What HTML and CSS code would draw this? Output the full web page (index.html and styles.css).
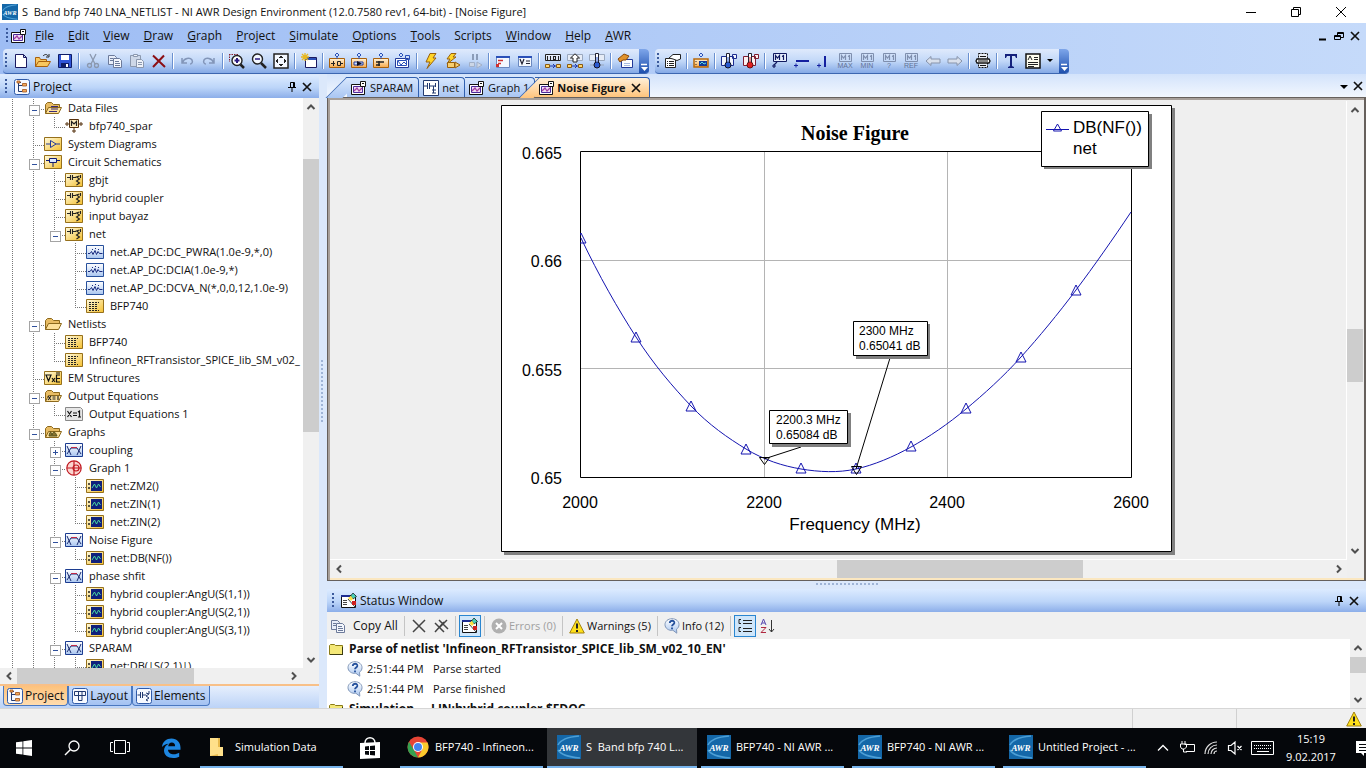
FILE: index.html
```html
<!DOCTYPE html>
<html lang="en">
<head>
<meta charset="utf-8">
<title>S Band bfp 740 LNA_NETLIST - NI AWR Design Environment</title>
<link rel="stylesheet" href="styles.css">
</head>
<body>
<svg class="sprite" aria-hidden="true">
  <defs>
    <linearGradient id="gold" x1="0" y1="0" x2="1" y2="1"><stop offset="0" stop-color="#fffbe0"/><stop offset="1" stop-color="#f5c030"/></linearGradient>
    <linearGradient id="ice" x1="0" y1="0" x2="0" y2="1"><stop offset="0" stop-color="#fff"/><stop offset="1" stop-color="#a9c6f0"/></linearGradient>
    <linearGradient id="peach" x1="0" y1="0" x2="0" y2="1"><stop offset="0" stop-color="#fff3d8"/><stop offset="1" stop-color="#f7a94a"/></linearGradient>
  </defs>
  <symbol id="awr" viewBox="0 0 24 24"><path fill="#1467a8" d="M0 0h24v24H0z"/><path fill="none" stroke="#4d9fd6" stroke-width="1.6" d="M22 1C10 2 3 6 1 10M1 15c3 5 11 7 22 8"/><text x="12" y="16" text-anchor="middle" fill="#fff" class="logo-text">AWR</text></symbol>
  <symbol id="graphwin" viewBox="0 0 16 16"><path fill="#fff" stroke="#111" d="M.5 4.500h13v10H.5z"/><path fill="#f0dcf4" d="M3 7h8v5H3z"/><path fill="none" stroke="#4b2a9a" d="M2.500 6.500h9v6h-9z"/><path fill="none" stroke="#a03ca0" stroke-width="1.300" d="M3 11l3-3 2 3 3-3"/><path fill="#fff" stroke="#111" d="M9.500 1.500h5v5h-5zM11 3.500h2"/></symbol>
  <symbol id="new" viewBox="0 0 16 16"><path fill="#fff" stroke="#1a1a60" d="M2.500 1.500h8l3 3v10h-11zM10.500 1.500v3h3"/></symbol>
  <symbol id="open" viewBox="0 0 16 16"><path fill="#f8c860" stroke="#a8600c" d="M.5 13.500v-9h4l1 2h6v2M.5 13.500l3-5h12l-3 5z"/><path fill="none" stroke="#222" d="M8 3c2-2 4-2 5 0m1-2v3h-3"/></symbol>
  <symbol id="save" viewBox="0 0 16 16"><path fill="#2f55d8" stroke="#0e1c66" d="M1.500 1.500h13v13h-13z"/><path fill="#fff" d="M4 2h8v5H4z"/><path fill="#0e1c66" d="M4 10h8v4H4z"/><path fill="#fff" d="M9 11h2v3H9z"/></symbol>
  <symbol id="cut" viewBox="0 0 16 16"><g fill="none" stroke="#8b98ae" stroke-width="1.300"><path d="M5 1l5 10M11 1L6 11"/><circle cx="4.500" cy="12.500" r="2"/><circle cx="11.500" cy="12.500" r="2"/></g></symbol>
  <symbol id="copy" viewBox="0 0 16 16"><path fill="#e8eefa" stroke="#6c7a9a" d="M1.500 2.500h6l2 2v7h-8z"/><path fill="#f4f7fd" stroke="#6c7a9a" d="M6.500 5.500h6l2 2v7h-8zM8 8.500h4M8 10.500h5M8 12.500h5M3 5.500h3M3 7.500h3"/></symbol>
  <symbol id="paste" viewBox="0 0 16 16"><path fill="#ced8e8" stroke="#8b98ae" d="M1.500 2.500h10v11h-10z"/><path fill="#eef2f9" stroke="#8b98ae" d="M4.500 1.500h4v2h-4zM7.500 6.500h5l2 2v6h-7zM9 9.500h4M9 11.500h4"/></symbol>
  <symbol id="del" viewBox="0 0 16 16"><path stroke="#8c0f14" stroke-width="2" d="M2 2.500l12 11.500M13 2.500L2 14"/></symbol>
  <symbol id="undo" viewBox="0 0 16 16"><path fill="none" stroke="#8295b8" stroke-width="1.500" d="M3 5v5h5M3.500 9.500C5 5 11 4 13 7c1 2 0 4-2 4"/></symbol>
  <symbol id="redo" viewBox="0 0 16 16"><path fill="none" stroke="#8295b8" stroke-width="1.500" d="M13 5v5H8M12.500 9.500C11 5 5 4 3 7c-1 2 0 4 2 4"/></symbol>
  <symbol id="zin" viewBox="0 0 16 16"><path fill="none" stroke="#8a2030" stroke-dasharray="1.500 1" d="M0 1.500h10M.5 1v8"/><circle cx="8" cy="7.500" r="5" fill="#fff" stroke="#222" stroke-width="1.400"/><path stroke="#2a1a80" stroke-width="2" d="M5.500 7.500h5M8 5v5"/><path stroke="#222" stroke-width="2.500" d="M11.500 11.500L15 15"/></symbol>
  <symbol id="zout" viewBox="0 0 16 16"><circle cx="6.500" cy="6" r="5" fill="#f4f8ff" stroke="#222" stroke-width="1.400"/><path stroke="#2a1a80" stroke-width="1.600" d="M4 6h5"/><path stroke="#222" stroke-width="2.500" d="M10 10l5 5"/></symbol>
  <symbol id="fit" viewBox="0 0 16 16"><path fill="#f4f8ff" stroke="#222" stroke-width="1.500" d="M1 1h14v14H1z"/><path fill="#222" d="M7 3h2v1h1v1H6V4h1zM7 13h2v-1h1v-1H6v1h1zM3 7v2h1v1h1V6H4v1zM13 7v2h-1v1h-1V6h1v1z"/></symbol>
  <symbol id="newwin" viewBox="0 0 16 16"><path fill="#fff" stroke="#1a1a60" d="M4.500 4.500h11v10h-11z"/><path fill="#2a50b8" d="M5 5h10v2H5z"/><path stroke="#e8b820" stroke-width="1.300" d="M4 0v8M0 4h8M1 1l6 6M7 1L1 7"/></symbol>
  <symbol id="addsch" viewBox="0 0 16 16"><path fill="url(#peach)" stroke="#a8600c" d="M.5 5.500h15v9H.5z"/><path fill="none" stroke="#2a50b8" d="M8 0l2 2-2 2-2-2zM8 4v2"/><path fill="none" stroke="#222" d="M2 10.500h4M4.500 8v5M8.500 8.500h3v4h-3zM12 10.500h2"/></symbol>
  <symbol id="addsys" viewBox="0 0 16 16"><path fill="url(#peach)" stroke="#a8600c" d="M.5 5.500h15v9H.5z"/><path fill="none" stroke="#2a50b8" d="M8 0l2 2-2 2-2-2zM8 4v2"/><path fill="#cfe0ff" stroke="#223a99" d="M3 9h9v3H3z"/><path fill="#112" d="M6 8l5 2.500L6 13z"/></symbol>
  <symbol id="addem" viewBox="0 0 16 16"><path fill="url(#peach)" stroke="#a8600c" d="M.5 5.500h15v9H.5z"/><path fill="none" stroke="#2a50b8" d="M8 0l2 2-2 2-2-2zM8 4v2"/><path stroke="#222" stroke-width="1.500" d="M3 9h8M3 12h4M6 8v5"/></symbol>
  <symbol id="addgraph" viewBox="0 0 16 16"><path fill="#fff" stroke="#223a99" d="M.5 5.500h13v9H.5z"/><path fill="none" stroke="#2a50b8" d="M6 0l2 2-2 2-2-2zM10.500 2.500h4v4h-4zM2.500 7.500h9v5h-9zM3 8l3 4 3-3 2 2"/></symbol>
  <symbol id="bolt" viewBox="0 0 16 16"><path fill="#ffd428" stroke="#98600c" d="M7 .5h6L10 5h3L4 15.500 7 9H3z"/></symbol>
  <symbol id="boltgo" viewBox="0 0 16 16"><path fill="#ffd428" stroke="#98600c" d="M6 .5h5L8 4h3L2 11l3-5H2z"/><path fill="#f8cf70" stroke="#98600c" d="M2.500 9.500h7v5h-7zM10 9l5 3-5 3z"/></symbol>
  <symbol id="pause" viewBox="0 0 16 16"><path fill="#8b9cb8" d="M5 1h2v6H5zM9 1h2v6H9z"/><path fill="#ccd6e6" stroke="#a2b0c8" d="M2.500 9.500h5v4h-5zM10 9l5 3-5 3z"/></symbol>
  <symbol id="eqred" viewBox="0 0 16 16"><path fill="#f4f8ff" stroke="#6a88c0" d="M1.500 3.500h13v11h-13z"/><path fill="#2a50b8" d="M1 3h14v2H1z"/><path stroke="#d03030" stroke-width="1.500" d="M3 7.500h5M3 10.500h3"/><path fill="#d03030" d="M1 11h3v3H1z"/></symbol>
  <symbol id="vars" viewBox="0 0 16 16"><path fill="#f4f8ff" stroke="#6a88c0" d="M1.500 3.500h13v10h-13z"/><path fill="#2a50b8" d="M1 3h14v2H1z"/><path fill="none" stroke="#223" stroke-width="1.200" d="M3 6l2 5 2-5M9 8h4M9 10.500h4"/></symbol>
  <symbol id="bits" viewBox="0 0 16 16"><path fill="#e8f0ff" stroke="#222" d="M.5 1.500h15v6H.5z"/><path fill="none" stroke="#222" stroke-width="1.100" d="M2.500 3v4M5.500 3v4M13.500 3v4M8.500 3.500h2v3h-2z"/><path fill="#ffd870" stroke="#8a5a10" d="M.5 11.500h4v3h-4zM11.500 11.500h4v3h-4z"/><path fill="none" stroke="#1c36a8" d="M5 13h6M8 11l2 2-2 2"/></symbol>
  <symbol id="uparr" viewBox="0 0 16 16"><path fill="#e6ecf6" stroke="#9aa8be" d="M.5 1.500h15v6H.5z"/><path fill="#fff" stroke="#222" d="M8 .8L12.500 5H10v4H6V5H3.500z"/><path fill="#ffd870" stroke="#8a5a10" d="M.5 11.500h4v3h-4zM11.500 11.500h4v3h-4z"/><path fill="none" stroke="#1c36a8" d="M5 13h6M8 11l2 2-2 2"/></symbol>
  <symbol id="thermo" viewBox="0 0 16 16"><path fill="#e6ecf6" stroke="#9aa8be" d="M.5 1.500h15v6H.5zM1 12h14"/><path fill="#fff" stroke="#223" d="M6.500.500h3v9h-3z"/><circle cx="8" cy="12" r="3" fill="#2a5ad0" stroke="#112"/><path stroke="#2a5ad0" d="M8 4v7"/></symbol>
  <symbol id="wiz" viewBox="0 0 16 16"><path fill="#fff" stroke="#223a99" d="M4.500 6.500h11v8h-11z"/><path fill="#e0922c" stroke="#8a4a08" d="M1 6l6-5 5 2-3 4H6L3 9z"/><path stroke="#a8bce0" d="M7 10.500h6M7 12.500h6"/></symbol>
  <symbol id="props" viewBox="0 0 16 16"><path fill="#fff" stroke="#222" d="M.5 5.500h10v9H.5z"/><path fill="#fff" stroke="#222" d="M4 5l4-3.500h7.500V6L12 7.500 8 6z"/><path stroke="#222" d="M2 8.500h1M4 8.500h5M2 10.500h1M4 10.500h5M2 12.500h1M4 12.500h5"/></symbol>
  <symbol id="meas" viewBox="0 0 16 16"><path fill="url(#peach)" stroke="#b86808" stroke-width="1.500" d="M1 6h14v8H1z"/><path fill="#123a98" d="M6 8h8v5H6z"/><path stroke="#222" d="M3 8v1M3 11v1"/><path fill="none" stroke="#5fe0e0" d="M7 11l2-2 2 2 2-1"/><path fill="none" stroke="#2a50b8" d="M8 0l2 2-2 2-2-2z"/></symbol>
  <symbol id="tblue" viewBox="0 0 16 16"><path fill="#f3f6fd" stroke="#1c2c90" d="M.5 3.500h12v9H.5zM11.500 1.500h4v4h-4z"/><path fill="#fff" stroke="#223" d="M5.500.500h3v10h-3z"/><circle cx="7" cy="12" r="3" fill="#2a5ad0" stroke="#112"/><path stroke="#2a5ad0" d="M7 4v7"/></symbol>
  <symbol id="tred" viewBox="0 0 16 16"><path fill="#fdf0f0" stroke="#801c30" d="M.5 3.500h12v9H.5zM11.500 1.500h4v4h-4z"/><path fill="#fff" stroke="#223" d="M5.500.500h3v10h-3z"/><circle cx="7" cy="12" r="3" fill="#e02020" stroke="#611"/><path stroke="#e02020" d="M7 4v7"/></symbol>
  <symbol id="m1" viewBox="0 0 16 16"><path fill="#e8effc" stroke="#111a60" d="M2.500.500h13v8h-13z"/><path fill="none" stroke="#111a60" stroke-width="1.200" d="M4.500 7V2.500L6.500 5l2-2.500V7M11 3.500l1.500-1V7M6 9l-3 3M1 13h4M3 11v4"/></symbol>
  <symbol id="mh" viewBox="0 0 16 16"><path stroke="#1420a0" stroke-width="2" d="M3 8h13"/><path stroke="#1420a0" d="M1 12.500h4M3 10.500v4"/></symbol>
  <symbol id="mv" viewBox="0 0 16 16"><path stroke="#1420a0" stroke-width="2" d="M10 3v11"/><path stroke="#1420a0" d="M2 12.500h4M4 10.500v4"/></symbol>
  <symbol id="mg" viewBox="0 0 16 9"><path fill="none" stroke="#7f8fae" d="M2.500.500h12v8h-12z"/><path fill="none" stroke="#7f8fae" stroke-width="1.200" d="M4.500 7V2.500L6.500 5l2-2.500V7M11 3.500l1.500-1V7"/></symbol>
  <symbol id="al" viewBox="0 0 16 16"><path fill="#d9e0ec" stroke="#8793aa" d="M1 8l5-4.500V6h9v4H6v2.500z"/></symbol>
  <symbol id="ar" viewBox="0 0 16 16"><path fill="#d9e0ec" stroke="#8793aa" d="M15 8l-5-4.500V6H1v4h9v2.500z"/></symbol>
  <symbol id="print" viewBox="0 0 16 16"><path fill="#e9edf5" stroke="#111" stroke-dasharray="2 1" d="M3.500.500h9v14h-9z"/><path fill="#fff" stroke="#111" stroke-width="1.300" d="M2 6h12l1 2-1 2H2L1 8z"/><path stroke="#111" d="M5 3.500h6M5 12.500h6M3 8h10"/></symbol>
  <symbol id="tt" viewBox="0 0 16 16"><path fill="#14207c" d="M2 1h12v4h-1l-1-2H9v10l2 1v1H5v-1l2-1V3H4L3 5H2z"/></symbol>
  <symbol id="notes" viewBox="0 0 16 16"><path fill="#fffef0" stroke="#111" stroke-width="1.500" d="M1 1h14v14H1z"/><path fill="none" stroke="#222" d="M9 4.500h4M9 6.500h4M3 9.500h10M3 11.500h10M3 13.500h6M3 7l2-4 2 4"/></symbol>
  <symbol id="projicon" viewBox="0 0 16 16"><rect x=".5" y=".5" width="15" height="15" rx="2" fill="#f6f9ff" stroke="#2f5aa8"/><path fill="none" stroke="#223a70" d="M4.500 3v9.500H8M4.500 6.500H8M3 3.500h4"/><path fill="#f3a95c" stroke="#a05018" stroke-width=".8" d="M8.500 4.500h4v2.500h-4zM8.500 10.500h4v2.500h-4zM3 2h3v2H3z"/></symbol>
  <symbol id="layicon" viewBox="0 0 16 16"><rect x=".5" y=".5" width="15" height="15" rx="2" fill="#f6f9ff" stroke="#2f5aa8"/><path fill="none" stroke="#223a70" d="M2.500 3.500h11v4h-11zM6.500 3.500v4M10 3.500v4M6.500 7.500v5h3.500v-5"/></symbol>
  <symbol id="elicon" viewBox="0 0 16 16"><rect x=".5" y=".5" width="15" height="15" rx="2" fill="#f6f9ff" stroke="#2f5aa8"/><path fill="none" stroke="#223a70" d="M1.500 7h3M4.500 4v6M6.500 4v6M6.500 7H10M10 5l3 1-3 2 3 2-3 2 2 1M13 3v3"/></symbol>
  <symbol id="fold" viewBox="0 0 18 14"><path fill="#e8bc64" stroke="#8c681c" d="M1.500 12.500v-9l2-2h4l2 2h6v3"/><path fill="#fde09a" stroke="#8c681c" d="M1.500 12.500l3-6h13l-3 6z"/></symbol>
  <symbol id="foldd" viewBox="0 0 18 14"><use href="#fold"/><path fill="none" stroke="#3a2a78" d="M7 5.500h7M7 8h7M5 10.500h8"/></symbol>
  <symbol id="folde" viewBox="0 0 18 14"><use href="#fold"/><path fill="none" stroke="#222" stroke-width="1.200" d="M4 7l3 4M7 7l-3 4M8.500 8h3M8.500 10h3M14 7v4"/></symbol>
  <symbol id="foldg" viewBox="0 0 18 14"><use href="#fold"/><path fill="#8a7430" stroke="#54501c" d="M5 11c1-5 2-5 3-1 1-4 3-4 5 1z"/></symbol>
  <symbol id="mdat" viewBox="0 0 18 14"><path fill="none" stroke="#55300c" d="M0 5h4M14 5h4M9 9v5M2 3v4M16 3v4M7 12h4"/><path fill="#ffeec0" stroke="#55300c" d="M4.500.500h9v8h-9z"/><path fill="none" stroke="#222" stroke-width="1.200" d="M6.500 7V2.500L9 5l2.500-2.500V7"/></symbol>
  <symbol id="sysd" viewBox="0 0 18 14"><path fill="url(#gold)" stroke="#96701c" d="M.5.500h17v13H.5z"/><path fill="none" stroke="#223a99" d="M2 7h4M12 7h4M6.500 3.500L12 7l-5.500 3.500z"/></symbol>
  <symbol id="cirs" viewBox="0 0 18 14"><path fill="url(#gold)" stroke="#96701c" d="M.5.500h17v13H.5z"/><path fill="#dce8ff" stroke="#111a70" d="M5.500 3.500h7v4h-7zM2 5.500h3M13 5.500h3M9 8v4"/></symbol>
  <symbol id="sch" viewBox="0 0 18 14"><path fill="url(#gold)" stroke="#96701c" d="M.5.500h17v13H.5z"/><path fill="none" stroke="#222" stroke-width="1.100" d="M2 4.500h3M5.500 2v5M7.500 2v5M7.500 4.500H11M14.500 3l-3 1 3 2-3 2 3 2-3 2M15.500 2v3"/></symbol>
  <symbol id="meter" viewBox="0 0 18 14"><path fill="url(#ice)" stroke="#27509c" d="M.5.500h17v13H.5z"/><path fill="none" stroke="#1a2c80" d="M2 8.500h2l1.500-2 1.500 3 2-4 1.500 4 1.500-3 1.500 2h3M6 4.500h1M9 3.500h1M12 4.500h1"/></symbol>
  <symbol id="netl" viewBox="0 0 18 14"><path fill="url(#gold)" stroke="#96701c" d="M.5.500h17v13H.5z"/><path stroke="#222" stroke-dasharray="2 1" d="M3 3.500h10M3 5.500h8M3 7.500h8M3 9.500h8M3 11.500h10"/></symbol>
  <symbol id="em" viewBox="0 0 18 14"><path fill="url(#gold)" stroke="#96701c" d="M.5.500h17v13H.5z"/><path fill="none" stroke="#111" stroke-width="1.200" d="M2 4h5L4.500 10zM8 7l3 4M11 7l-3 4M16 4h-3.500v7H16M12.500 7.500H16M12 2h4"/></symbol>
  <symbol id="xeq" viewBox="0 0 18 14"><path fill="#e6e6e6" stroke="#888" d="M.5.500h15l2 2v11H.5z"/><path fill="none" stroke="#111" stroke-width="1.200" d="M2.500 4l4 6M6.500 4l-4 6M8 6h4M8 8.500h4M13 5l1.500-1v6M13 10h3"/></symbol>
  <symbol id="rect" viewBox="0 0 18 14"><path fill="url(#ice)" stroke="#1c3c90" d="M.5.500h17v13H.5z"/><path fill="none" stroke="#1c2c70" d="M2 3l4 9M16 3l-4 9M2 11l4-6h6l4 6"/><path stroke="#c02848" d="M6 4.500h6"/></symbol>
  <symbol id="smith" viewBox="0 0 18 16"><g fill="#fbd5d0" stroke="#c01820" stroke-width="1.200"><circle cx="9" cy="8" r="7.200"/><circle cx="11" cy="8" r="3" fill="none"/><path d="M2 8h14M9 1v14" fill="none"/></g></symbol>
  <symbol id="msr" viewBox="0 0 18 14"><path fill="url(#gold)" stroke="#96701c" d="M.5.500h17v13H.5z"/><path fill="#10207c" d="M5 2h11v10H5z"/><path stroke="#222" stroke-width="1.500" d="M3 4v2M3 8v2"/><path fill="none" stroke="#49d8a0" d="M6 9l2.500-4 2 4 2-4 2 3"/></symbol>
  <symbol id="pin" viewBox="0 0 10 10"><path fill="none" stroke="#000" d="M3.500.500h4v5h-4zM6.500 1v4M1 5.500h8M5 6v4"/></symbol>
  <symbol id="x" viewBox="0 0 10 10"><path fill="none" stroke="currentColor" stroke-width="1.700" d="M1 1l8 8M9 1L1 9"/></symbol>
  <symbol id="up" viewBox="0 0 10 10"><path fill="none" stroke="#505050" stroke-width="2" d="M1.500 7L5 3.500 8.500 7"/></symbol>
  <symbol id="dn" viewBox="0 0 10 10"><path fill="none" stroke="#505050" stroke-width="2" d="M1.500 3L5 6.500 8.500 3"/></symbol>
  <symbol id="lf" viewBox="0 0 10 10"><path fill="none" stroke="#505050" stroke-width="2" d="M7 1.500L3.500 5 7 8.500"/></symbol>
  <symbol id="rt" viewBox="0 0 10 10"><path fill="none" stroke="#505050" stroke-width="2" d="M3 1.500L6.500 5 3 8.500"/></symbol>
  <symbol id="stat" viewBox="0 0 16 16"><path fill="#fff" stroke="#111" d="M.5 2.500h14v12H.5z"/><path fill="#1c2c90" d="M0 2h9v2H0z"/><path fill="none" stroke="#444" d="M2 7.500h4M2 9.500h4M2 11.500h4M7 6l7 8"/><path fill="#48d0b8" stroke="#111" stroke-width=".7" d="M12 0l3.500 3.500L12 6 9.500 3z"/><path fill="#ffe040" d="M7 5l3-2 2 3-2 2z"/><path fill="#d02020" d="M11 8h4v4h-4z"/></symbol>
  <symbol id="warn" viewBox="0 0 16 16"><path fill="#ffe01a" stroke="#a08010" d="M8 1l7.300 14H.7z"/><path stroke="#222" stroke-width="2" d="M8 5.500v5M8 12v2"/></symbol>
  <symbol id="info" viewBox="0 0 16 16"><path fill="url(#ice)" stroke="#8096b8" d="M8 .7c4 0 7 2.500 7 6 0 2-1 3.500-2.500 4.500l.3 4-4-3C4.500 13 1 10 1 6.700c0-3.500 3-6 7-6z"/><path fill="none" stroke="#24509c" stroke-width="1.800" d="M5.800 5c0-3 5-3 4.500 0C10 6.500 8 6.500 8 8.300M8 9.500v1.700"/></symbol>
  <symbol id="yfold" viewBox="0 0 14 12"><path fill="#f4e878" stroke="#8a7c18" d="M.5 2.500l1-1h4l1 1h7v9H.5z"/><path stroke="#3c3c10" d="M1 11.500h13M13.500 4v8"/></symbol>
</svg>

<div class="app">
  <header class="title">
    <svg class="i16"><use href="#awr"/></svg>
    <h1>S&nbsp; Band bfp 740 LNA_NETLIST - NI AWR Design Environment (12.0.7580 rev1, 64-bit) - [Noise Figure]</h1>
    <div class="caption">
      <button aria-label="Minimize"><svg viewBox="0 0 10 10"><path d="M0 5.500h10" stroke="#000"/></svg></button>
      <button aria-label="Restore"><svg viewBox="0 0 10 10"><path d="M.5 2.500h7v7h-7zM2.500 2V.5h7v7H8" fill="none" stroke="#000"/></svg></button>
      <button aria-label="Close"><svg viewBox="0 0 10 10"><path d="M0 0l10 10M10 0L0 10" stroke="#000"/></svg></button>
    </div>
  </header>

  <nav class="menu">
    <i class="grip"></i><svg class="i16"><use href="#graphwin"/></svg>
    <button><u>F</u>ile</button><button><u>E</u>dit</button><button><u>V</u>iew</button><button><u>D</u>raw</button><button><u>G</u>raph</button><button><u>P</u>roject</button><button><u>S</u>imulate</button><button><u>O</u>ptions</button><button><u>T</u>ools</button><button>Scripts</button><button><u>W</u>indow</button><button><u>H</u>elp</button><button><u>A</u>WR</button>
    <div class="mdi">
      <button aria-label="Minimize window"><svg class="i10"><path d="M1 8.500h7" stroke="#000" stroke-width="2"/></svg></button>
      <button aria-label="Restore window"><svg class="i10"><path d="M.5 4.500h6v4h-6zM.5 5.500h6M3.500 4V1.500h6v5H7M3.500 2.500h6" fill="none" stroke="#000"/></svg></button>
      <button aria-label="Close window"><svg class="i10"><use href="#x"/></svg></button>
    </div>
  </nav>

  <div class="bars">
    <div class="bar">
      <i class="grip"></i>
      <button aria-label="New"><svg class="i16"><use href="#new"/></svg></button><button aria-label="Open"><svg class="i16"><use href="#open"/></svg></button><button aria-label="Save"><svg class="i16"><use href="#save"/></svg></button><i class="sep"></i>
      <button aria-label="Cut"><svg class="i16"><use href="#cut"/></svg></button><button aria-label="Copy"><svg class="i16"><use href="#copy"/></svg></button><button aria-label="Paste"><svg class="i16"><use href="#paste"/></svg></button><button aria-label="Delete"><svg class="i16"><use href="#del"/></svg></button><i class="sep"></i>
      <button aria-label="Undo"><svg class="i16"><use href="#undo"/></svg></button><button aria-label="Redo"><svg class="i16"><use href="#redo"/></svg></button><i class="sep"></i>
      <button aria-label="Zoom in"><svg class="i16"><use href="#zin"/></svg></button><button aria-label="Zoom out"><svg class="i16"><use href="#zout"/></svg></button><button aria-label="View all"><svg class="i16"><use href="#fit"/></svg></button><i class="sep"></i>
      <button aria-label="New window"><svg class="i16"><use href="#newwin"/></svg></button><i class="sep"></i>
      <button aria-label="Add schematic"><svg class="i16"><use href="#addsch"/></svg></button><button aria-label="Add system diagram"><svg class="i16"><use href="#addsys"/></svg></button><button aria-label="Add EM structure"><svg class="i16"><use href="#addem"/></svg></button><button aria-label="Add graph"><svg class="i16"><use href="#addgraph"/></svg></button><i class="sep"></i>
      <button aria-label="Analyze"><svg class="i16"><use href="#bolt"/></svg></button><button aria-label="Run simulators"><svg class="i16"><use href="#boltgo"/></svg></button><button aria-label="Pause"><svg class="i16"><use href="#pause"/></svg></button><i class="sep"></i>
      <button aria-label="Optimizer"><svg class="i16"><use href="#eqred"/></svg></button><button aria-label="Variables"><svg class="i16"><use href="#vars"/></svg></button><i class="sep"></i>
      <button aria-label="Data"><svg class="i16"><use href="#bits"/></svg></button><button aria-label="Export"><svg class="i16"><use href="#uparr"/></svg></button><button aria-label="Tune data"><svg class="i16"><use href="#thermo"/></svg></button><i class="sep"></i>
      <button aria-label="Wizard"><svg class="i16"><use href="#wiz"/></svg></button>
      <button class="more" aria-label="More"><svg class="i10"><path d="M2 1.500h6" stroke="#fff" stroke-width="1.500"/><path d="M2 4h7L5.500 8z" fill="#fff"/></svg></button>
    </div>
    <div class="bar">
      <i class="grip"></i>
      <button aria-label="Properties"><svg class="i16"><use href="#props"/></svg></button><i class="sep"></i>
      <button aria-label="Add measurement"><svg class="i16"><use href="#meas"/></svg></button><i class="sep"></i>
      <button aria-label="Freeze"><svg class="i16"><use href="#tblue"/></svg></button><button aria-label="Clear frozen"><svg class="i16"><use href="#tred"/></svg></button><i class="sep"></i>
      <button aria-label="Marker"><svg class="i16"><use href="#m1"/></svg></button><button aria-label="Horizontal line"><svg class="i16"><use href="#mh"/></svg></button><button aria-label="Vertical line"><svg class="i16"><use href="#mv"/></svg></button>
      <button class="mk"><svg><use href="#mg"/></svg>MAX</button><button class="mk"><svg><use href="#mg"/></svg>MIN</button><button class="mk"><svg><use href="#mg"/></svg>?</button><button class="mk"><svg><use href="#mg"/></svg>REF</button>
      <button aria-label="Previous"><svg class="i16"><use href="#al"/></svg></button><button aria-label="Next"><svg class="i16"><use href="#ar"/></svg></button><i class="sep"></i>
      <button aria-label="Print"><svg class="i16"><use href="#print"/></svg></button><i class="sep"></i>
      <button aria-label="Text"><svg class="i16"><use href="#tt"/></svg></button><button aria-label="Notes"><svg class="i16"><use href="#notes"/></svg></button>
      <button class="drop" aria-label="Notes menu"><svg class="i10"><path d="M2 3h6L5 6z"/></svg></button>
      <button class="more" aria-label="More"><svg class="i10"><path d="M2 1.500h6" stroke="#fff" stroke-width="1.500"/><path d="M2 4h7L5.500 8z" fill="#fff"/></svg></button>
    </div>
  </div>

  <main class="work">
    <aside class="side">
      <div class="phead"><i class="grip"></i><svg class="i16"><use href="#projicon"/></svg><h2>Project</h2><button aria-label="Pin"><svg class="i10"><use href="#pin"/></svg></button><button aria-label="Close panel"><svg class="i10"><use href="#x"/></svg></button></div>
      <div class="treebox">
        <ul class="tree">
          <li><i class="v"></i><i class="v h b"></i><svg><use href="#foldd"/></svg>Data Files</li>
          <li><i class="v"></i><i class="v"></i><i class="l h"></i><svg><use href="#mdat"/></svg>bfp740_spar</li>
          <li><i class="v"></i><i class="v h"></i><svg><use href="#sysd"/></svg>System Diagrams</li>
          <li><i class="v"></i><i class="v h b"></i><svg><use href="#cirs"/></svg>Circuit Schematics</li>
          <li><i class="v"></i><i class="v"></i><i class="v h"></i><svg><use href="#sch"/></svg>gbjt</li>
          <li><i class="v"></i><i class="v"></i><i class="v h"></i><svg><use href="#sch"/></svg>hybrid coupler</li>
          <li><i class="v"></i><i class="v"></i><i class="v h"></i><svg><use href="#sch"/></svg>input bayaz</li>
          <li><i class="v"></i><i class="v"></i><i class="l h b"></i><svg><use href="#sch"/></svg>net</li>
          <li><i class="v"></i><i class="v"></i><i></i><i class="v h"></i><svg><use href="#meter"/></svg>net.AP_DC:DC_PWRA(1.0e-9,*,0)</li>
          <li><i class="v"></i><i class="v"></i><i></i><i class="v h"></i><svg><use href="#meter"/></svg>net.AP_DC:DCIA(1.0e-9,*)</li>
          <li><i class="v"></i><i class="v"></i><i></i><i class="v h"></i><svg><use href="#meter"/></svg>net.AP_DC:DCVA_N(*,0,0,12,1.0e-9)</li>
          <li><i class="v"></i><i class="v"></i><i></i><i class="l h"></i><svg><use href="#netl"/></svg>BFP740</li>
          <li><i class="v"></i><i class="v h b"></i><svg><use href="#fold"/></svg>Netlists</li>
          <li><i class="v"></i><i class="v"></i><i class="v h"></i><svg><use href="#netl"/></svg>BFP740</li>
          <li><i class="v"></i><i class="v"></i><i class="l h"></i><svg><use href="#netl"/></svg>Infineon_RFTransistor_SPICE_lib_SM_v02_</li>
          <li><i class="v"></i><i class="v h"></i><svg><use href="#em"/></svg>EM Structures</li>
          <li><i class="v"></i><i class="v h b"></i><svg><use href="#folde"/></svg>Output Equations</li>
          <li><i class="v"></i><i class="v"></i><i class="l h"></i><svg><use href="#xeq"/></svg>Output Equations 1</li>
          <li><i class="v"></i><i class="v h b"></i><svg><use href="#foldg"/></svg>Graphs</li>
          <li><i class="v"></i><i class="v"></i><i class="v h b plus"></i><svg><use href="#rect"/></svg>coupling</li>
          <li><i class="v"></i><i class="v"></i><i class="v h b"></i><svg class="tall"><use href="#smith"/></svg>Graph 1</li>
          <li><i class="v"></i><i class="v"></i><i class="v"></i><i class="v h"></i><svg><use href="#msr"/></svg>net:ZM2()</li>
          <li><i class="v"></i><i class="v"></i><i class="v"></i><i class="v h"></i><svg><use href="#msr"/></svg>net:ZIN(1)</li>
          <li><i class="v"></i><i class="v"></i><i class="v"></i><i class="l h"></i><svg><use href="#msr"/></svg>net:ZIN(2)</li>
          <li><i class="v"></i><i class="v"></i><i class="v h b"></i><svg><use href="#rect"/></svg>Noise Figure</li>
          <li><i class="v"></i><i class="v"></i><i class="v"></i><i class="l h"></i><svg><use href="#msr"/></svg>net:DB(NF())</li>
          <li><i class="v"></i><i class="v"></i><i class="v h b"></i><svg><use href="#rect"/></svg>phase shfit</li>
          <li><i class="v"></i><i class="v"></i><i class="v"></i><i class="v h"></i><svg><use href="#msr"/></svg>hybrid coupler:AngU(S(1,1))</li>
          <li><i class="v"></i><i class="v"></i><i class="v"></i><i class="v h"></i><svg><use href="#msr"/></svg>hybrid coupler:AngU(S(2,1))</li>
          <li><i class="v"></i><i class="v"></i><i class="v"></i><i class="l h"></i><svg><use href="#msr"/></svg>hybrid coupler:AngU(S(3,1))</li>
          <li><i class="v"></i><i class="v"></i><i class="v h b"></i><svg><use href="#rect"/></svg>SPARAM</li>
          <li><i class="v"></i><i class="v"></i><i class="v"></i><i class="v h"></i><svg><use href="#msr"/></svg>net:DB(|S(2,1)|)</li>
        </ul>
        <div class="vs vs-tree"><svg class="i10"><use href="#up"/></svg><i></i><b></b><i></i><svg class="i10"><use href="#dn"/></svg></div>
      </div>
      <div class="hs hs-tree"><svg class="i10"><use href="#lf"/></svg><b></b><i></i><svg class="i10"><use href="#rt"/></svg></div>
      <div class="ptabs">
        <button class="on"><svg class="i16"><use href="#projicon"/></svg>Project</button><button><svg class="i16"><use href="#layicon"/></svg>Layout</button><button><svg class="i16"><use href="#elicon"/></svg>Elements</button>
      </div>
    </aside>
    <i class="split-v"></i>

    <section class="docs">
      <div class="dtabs">
        <button><svg class="i16"><use href="#graphwin"/></svg>SPARAM</button><button class="flat"><svg class="i16"><path fill="#fff" stroke="#223a70" d="M.5.500h15v15H.5z"/><path fill="none" stroke="#223a70" d="M1 6h3M4.500 3v6M6.500 3v6M7 6h5M10.500 6v7M12.500 3v4M9 10h4M9 13h4"/></svg>net</button><button class="flat"><svg class="i16"><use href="#graphwin"/></svg>Graph 1</button><button class="on"><svg class="i16"><use href="#graphwin"/></svg>Noise Figure<svg class="i10 shut"><use href="#x"/></svg></button>
        <div class="dtools"><button aria-label="Window list"><svg class="i10"><path d="M1 4h8L5 8z"/></svg></button><button aria-label="Close document"><svg class="i10"><use href="#x"/></svg></button></div>
      </div>
      <div class="view">
        <div class="canvas">
          <svg class="plot" viewBox="501 105 671 447" role="img" aria-label="Noise Figure graph">
            <defs><path id="tri" d="M0-6L5 4H-5z"/><clipPath id="area"><path d="M580 152h552v326H580z"/></clipPath></defs>
            <path class="frame" d="M501.500 105.500h670v446h-670z"/>
            <text class="ptitle" x="855" y="140">Noise Figure</text>
            <path class="gridline" d="M764.500 152v325M947.500 152v325M581 260.500h550M581 368.500h550"/>
            <path class="frame axes" d="M580.500 151.500h551v326h-551z"/>
            <g class="curve" clip-path="url(#area)">
              <path d="M581 238C599 276 618 309 636 337S673 387 691 406S728 438 746 449S783 466 801 469S838 473 856 469S893 457 911 447S948 424 966 409S1003 377 1021 357S1058 314 1076 290S1113 239 1131 212"/>
              <use href="#tri" x="581" y="239"/><use href="#tri" x="636" y="338"/><use href="#tri" x="691" y="407"/><use href="#tri" x="746" y="450"/><use href="#tri" x="801" y="469"/><use href="#tri" x="856" y="469"/><use href="#tri" x="911" y="447"/><use href="#tri" x="966" y="409"/><use href="#tri" x="1021" y="358"/><use href="#tri" x="1076" y="291"/>
            </g>
            <path class="lead" d="M764 459L801 447M856 469L890 358M759.500 457.500h10l-5 7zM851.500 466.500h10l-5 8z"/>
            <g class="num">
              <text x="562" y="159">0.665</text><text x="562" y="267">0.66</text><text x="562" y="376">0.655</text><text x="562" y="484">0.65</text>
            </g>
            <g class="num mid">
              <text x="580" y="508">2000</text><text x="764" y="508">2200</text><text x="947" y="508">2400</text><text x="1131" y="508">2600</text>
            </g>
            <text class="cap mid" x="855" y="530">Frequency (MHz)</text>
            <path class="shade" d="M772 413h79v34h-79zM856 324h74v35h-74zM1044 114h108v55h-108z"/>
            <path class="frame" d="M769.500 410.500h78v33h-78zM853.500 321.500h74v34h-74zM1041.500 111.500h107v55h-107z"/>
            <g class="small"><text x="776" y="424">2200.3 MHz</text><text x="776" y="439">0.65084 dB</text><text x="859" y="335">2300 MHz</text><text x="859" y="350">0.65041 dB</text></g>
            <g class="curve"><path d="M1046 129.500h23"/><path d="M1057.500 124l4 7h-8z"/></g>
            <g class="cap"><text x="1073" y="133">DB(NF())</text><text x="1073" y="154">net</text></g>
          </svg>
        </div>
        <div class="vs vs-view"><svg class="i10"><use href="#up"/></svg><i></i><b></b><i></i><svg class="i10"><use href="#dn"/></svg></div>
        <div class="hs hs-view"><svg class="i10"><use href="#lf"/></svg><i></i><b></b><i></i><svg class="i10"><use href="#rt"/></svg></div>
      </div>
      <i class="split-h"></i>
      <section class="status">
        <div class="phead"><i class="grip"></i><svg class="i16"><use href="#stat"/></svg><h2>Status Window</h2><button aria-label="Pin status"><svg class="i10"><use href="#pin"/></svg></button><button aria-label="Close status"><svg class="i10"><use href="#x"/></svg></button></div>
        <div class="stools">
          <button class="first"><svg class="i16"><use href="#copy"/></svg>Copy All</button><i></i>
          <button aria-label="Clear"><svg class="i16"><path d="M2 2l12 12M14 2L2 14" stroke="#444" stroke-width="1.500"/></svg></button><button aria-label="Clear all"><svg class="i16"><path d="M2 5l9 9M11 4L2 14M6 2l9 9M14 2L7 9" stroke="#444" stroke-width="1.500"/></svg></button><i></i>
          <button class="lit" aria-label="Show status"><svg class="i16"><use href="#stat"/></svg></button><i></i>
          <button disabled><svg class="i16"><circle cx="8" cy="8" r="7.500" fill="#b0b0b0"/><path d="M5 5l6 6M11 5l-6 6" stroke="#fff" stroke-width="2"/></svg>Errors (0)</button><i></i>
          <button><svg class="i16"><use href="#warn"/></svg>Warnings (5)</button><i></i>
          <button><svg class="i16"><use href="#info"/></svg>Info (12)</button><i></i>
          <button class="lit" aria-label="Group"><svg class="i16"><path d="M6 2.500h9M6 5.500h9M6 10.500h9M6 13.500h9M4 1.500H2v4h2M4 9.500H2v4h2" fill="none" stroke="#222"/></svg></button>
          <button class="sort" aria-label="Sort"><svg class="i16"><path d="M2 7l2.500-6L7 7M3 5h3" fill="none" stroke="#5848b0"/><path d="M2 9.500h5l-5 5h5" fill="none" stroke="#b02840"/><path d="M12.500 2v12M10 11l2.500 3 2.500-3" fill="none" stroke="#333"/></svg></button>
        </div>
        <div class="logbox">
          <ul class="log">
            <li class="grp"><svg><use href="#yfold"/></svg>Parse of netlist 'Infineon_RFTransistor_SPICE_lib_SM_v02_10_EN'</li>
            <li><svg><use href="#info"/></svg><time>2:51:44 PM</time>Parse started</li>
            <li><svg><use href="#info"/></svg><time>2:51:44 PM</time>Parse finished</li>
            <li class="grp"><svg><use href="#yfold"/></svg>Simulation&nbsp; -- LIN:hybrid coupler.$FDOC</li>
          </ul>
          <div class="vs vs-log"><svg class="i10"><use href="#up"/></svg><i></i><b></b><i></i><svg class="i10"><use href="#dn"/></svg></div>
        </div>
      </section>
    </section>
  </main>

  <footer class="foot"><i></i><i></i><svg class="i16"><use href="#warn"/></svg></footer>

  <nav class="task">
    <button class="ic" aria-label="Start"><svg class="i16" viewBox="0 0 16 16"><path fill="#fff" d="M0 2.300l6.500-.9v6.200H0zM7.300 1.300L16 0v7.600H7.300zM0 8.400h6.500v6.200L0 13.700zM7.300 8.400H16V16l-8.700-1.300z"/></svg></button>
    <button class="ic" aria-label="Search"><svg class="i16"><circle cx="10" cy="6" r="5" fill="none" stroke="#fff" stroke-width="1.300"/><path d="M6.500 9.500L1 15" stroke="#fff" stroke-width="1.500"/></svg></button>
    <button class="ic" aria-label="Task View"><svg class="i20"><path d="M4.500 2.500h11v13h-11zM3 4.500H.5v9H3M17 4.500h2.500v9H17" fill="none" stroke="#fff"/></svg></button>
    <button class="ic edge" aria-label="Edge"><svg class="i20" viewBox="0 0 20 20"><path fill="#1e86e0" d="M1 9C1.500 3.500 5.500.500 10.500.500 16 .5 19.500 4.500 19.500 9.500v2.200H7c.2 3.300 3 4.500 5.800 4.500 2 0 4-.6 5.400-1.500v4c-1.600.9-3.700 1.300-6 1.300C6.500 20 3 17 3 12.500 3 9.500 4.800 7 7.600 5.700 5 6 2.500 7 1 9zm6.200-.8h6.900c0-2.300-1.200-3.600-3.300-3.600-2 0-3.300 1.500-3.600 3.600z"/></svg></button>
    <button class="app-b"><svg class="i24"><path fill="#e8b94c" d="M4 3h10v18H4z"/><path fill="#ffe08a" d="M4 3h8v16l-8 2zM12 12h5v9h-5z"/></svg><span>Simulation Data</span></button>
    <button class="ic store" aria-label="Store"><svg class="i24"><path fill="#fff" d="M2 7l20-1v16l-20 1z"/><path fill="none" stroke="#fff" stroke-width="1.500" d="M7 7c0-7 10-7 10 0"/><path fill="#05070b" d="M7 10.500l4-.5v4H7zM12 10l5-.5V14h-5zM7 15h4v4l-4-.5zM12 15h5v4.500l-5-.5z"/></svg></button>
    <button class="app-b"><svg class="i24"><circle cx="12" cy="12" r="10.500" fill="#e64435"/><path fill="#34a050" d="M3 6.700L8.500 16l3.500 6.500A10.500 10.500 0 0 1 3 6.700z"/><path fill="#fbc92c" d="M21.500 7.500H12L16.500 14 12 22.500A10.500 10.500 0 0 0 21.500 7.500z"/><circle cx="12" cy="12" r="5" fill="#fff"/><circle cx="12" cy="12" r="4" fill="#4484f0"/></svg><span>BFP740 - Infineon...</span></button>
    <button class="app-b on"><svg class="i24"><use href="#awr"/></svg><span>S&nbsp; Band bfp 740 L...</span></button>
    <button class="app-b"><svg class="i24"><use href="#awr"/></svg><span>BFP740 - NI AWR ...</span></button>
    <button class="app-b"><svg class="i24"><use href="#awr"/></svg><span>BFP740 - NI AWR ...</span></button>
    <button class="app-b"><svg class="i24"><use href="#awr"/></svg><span>Untitled Project - ...</span></button>
    <div class="tray">
      <svg class="i16"><path d="M3 10.500l5-5 5 5" fill="none" stroke="#fff" stroke-width="1.300"/></svg>
      <svg class="i16"><path d="M5.500 4.500h10v7H7M3 1v3M6 1v3M1.500 4h6v3l-2 2H3L1.500 7zM4.500 9v3H8" fill="none" stroke="#fff"/></svg>
      <svg class="i16"><path d="M2 14A12 12 0 0 1 14 2M5 14a9 9 0 0 1 9-9M8 14a6 6 0 0 1 6-6M11 14a3 3 0 0 1 3-3" fill="none" stroke="#ddd" stroke-width="1.200"/></svg>
      <svg class="i16"><path d="M1.500 5.500H4l4-3.500v12L4 10.500H1.500zM10.500 6l4 4M14.500 6l-4 4" fill="none" stroke="#fff" stroke-width="1.200"/></svg>
      <svg class="i24"><path d="M.5 5.500h22v13H.5z" fill="none" stroke="#fff"/><path d="M3 9.500h18M3 12.500h18" stroke="#fff" stroke-dasharray="1 1"/><path d="M6 15.500h12" stroke="#fff"/></svg>
      <div class="clock"><time>15:19</time><time>9.02.2017</time></div>
      <svg class="note"><path fill="#fff" d="M0 1h12v12H8v3l-3-3H0z"/><path stroke="#05070b" d="M3 4.500h9M3 7.500h9M3 10.500h9"/></svg>
    </div>
  </nav>
</div>
</body>
</html>
```
FILE: styles.css
```css
* { box-sizing: border-box; }
body { margin: 0; font: 11px/16px "Open Sans", "Noto Sans", sans-serif; color: #111; }
button { font: inherit; color: inherit; background: none; border: 0; padding: 0; margin: 0; display: flex; align-items: center; white-space: nowrap; }
h1, h2 { font: inherit; margin: 0; }
ul { list-style: none; margin: 0; padding: 0; }
svg { flex: none; display: block; }
.sprite { position: absolute; width: 0; height: 0; }
.logo-text { font: italic bold 9px "Liberation Serif", serif; }
.i10 { width: 10px; height: 10px; }
.i16 { width: 16px; height: 16px; }
.i20 { width: 20px; height: 20px; }
.i24 { width: 24px; height: 24px; }
.app { height: 100vh; display: flex; flex-direction: column; overflow: hidden; background: #dbe8fb; }

.title { height: 23px; flex: none; background: #fff; display: flex; align-items: center; gap: 4px; padding-left: 2px; }
.title h1 { flex: 1; white-space: nowrap; }
.caption { display: flex; padding-right: 3px; }
.caption button { width: 45px; height: 20px; justify-content: center; }
.caption svg { width: 10px; height: 10px; }

.menu { height: 26px; flex: none; display: flex; align-items: center; padding: 0 6px; background: linear-gradient(90deg, #9ebdf4, #c5dafa); }
.menu > button { margin-left: 14px; font-size: 12px; }
.menu > .i16 + button { margin-left: 8px; }
.mdi { margin-left: auto; display: flex; gap: 6px; }
.grip { width: 3px; height: 16px; flex: none; margin-right: 2px; background: repeating-linear-gradient(#3b5a9c 0 2px, transparent 2px 4px) 0 0 / 2px 100% no-repeat; }

.bars { height: 25px; flex: none; display: flex; gap: 6px; padding-left: 3px; background: linear-gradient(90deg, #9ebdf4, #c5dafa); }
.bar { display: flex; align-items: center; height: 25px; padding-left: 2px; border-radius: 4px; overflow: hidden; background: linear-gradient(#dfeafc, #c2d8f8 50%, #84a9e6); border-bottom: 1px solid #3c66b0; }
.bar button { width: 22px; height: 24px; justify-content: center; }
.bar .sep { width: 6px; height: 16px; background: linear-gradient(#6a90d0, #6a90d0) 2px 0 / 1px 100% no-repeat, linear-gradient(#fff, #fff) 3px 0 / 1px 100% no-repeat; }
.bar .mk { flex-direction: column; font: 7px/7px "Liberation Sans", sans-serif; color: #5f7196; }
.mk svg { width: 16px; height: 9px; }
.bar .drop { width: 12px; }
.bar .more { width: 10px; height: 25px; margin-left: 3px; align-items: flex-end; padding-bottom: 1px; background: linear-gradient(#7ea6ea, #1a4cab); }

.work { flex: 1; min-height: 0; display: grid; grid-template-columns: 319px 8px minmax(0, 1fr); }
.side { display: flex; flex-direction: column; min-height: 0; padding-top: 1px; }
.split-v { background: repeating-linear-gradient(#9fb4d6 0 2px, transparent 2px 4px) 2px 50% / 2px 62px no-repeat #dbe8fb; }
.phead { height: 23px; flex: none; display: flex; align-items: center; gap: 5px; padding: 0 7px 0 5px; background: linear-gradient(#dcebff, #bcd5f9 55%, #8caee9); }
.phead .grip { margin-right: 1px; }
.phead h2 { flex: 1; font-size: 12px; margin-left: -2px; }
.treebox { flex: 1; min-height: 0; display: flex; background: #fff; }
.tree { flex: 1; min-width: 0; overflow: hidden; padding: 1px 0 0 2px; }
.tree li { display: flex; align-items: center; height: 18px; white-space: nowrap; }
.tree svg { width: 18px; height: 14px; margin-right: 6px; }
.tree svg.tall { height: 16px; }
.tree i { width: 21px; height: 18px; flex: none; position: relative; }
.tree .v { background: repeating-linear-gradient(#777 0 1px, transparent 1px 2px) 10px 0 / 1px 100% no-repeat; }
.tree .l { background: repeating-linear-gradient(#777 0 1px, transparent 1px 2px) 10px 0 / 1px 10px no-repeat; }
.tree .h { background-image: repeating-linear-gradient(#777 0 1px, transparent 1px 2px), repeating-linear-gradient(90deg, #777 0 1px, transparent 1px 2px); background-position: 10px 0, 10px 10px; background-size: 1px 100%, 11px 1px; }
.tree .l.h { background-size: 1px 10px, 11px 1px; }
.tree .b::before { content: ""; position: absolute; left: 6px; top: 6px; width: 9px; height: 9px; border: 1px solid #a4a4a4; background: linear-gradient(#30509c, #30509c) 50% 50% / 5px 1px no-repeat #fff; }
.tree .plus::before { background: linear-gradient(#30509c, #30509c) 50% 50% / 5px 1px no-repeat, linear-gradient(#30509c, #30509c) 50% 50% / 1px 5px no-repeat #fff; }

.vs, .hs { display: grid; background: #f0f0f0; justify-items: center; align-items: center; }
.vs b, .hs b { background: #cdcdcd; justify-self: stretch; align-self: stretch; }
.vs { width: 16px; flex: none; }
.hs { height: 16px; flex: none; }
.vs-tree { grid-template-rows: 17px 44fr 272fr 219fr 17px; }
.hs-tree { grid-template-columns: 17px 177fr 75fr 50px; }
.ptabs { height: 24px; flex: none; display: flex; align-items: flex-start; padding-left: 3px; border-top: 2px solid #f8c088; background: linear-gradient(#e6effd, #bcd3f7); }
.ptabs button { height: 20px; gap: 2px; padding: 0 3px; font-size: 12px; border: 1px solid #4a78c0; border-top: 0; border-radius: 0 0 4px 4px; background: linear-gradient(#c8dcfa, #a4c2f2); }
.ptabs .on { background: linear-gradient(#fdc27c, #ffdcae); }

.docs { display: flex; flex-direction: column; min-width: 0; min-height: 0; }
.dtabs { height: 23px; flex: none; display: flex; align-items: flex-end; padding-left: 20px; background: linear-gradient(#d3e3fb, #f2f7fe); }
.dtabs > button { height: 20px; position: relative; padding: 0 5px 0 4px; gap: 3px; border: 1px solid #3060b0; border-width: 1px 1px 0 0; border-radius: 0 4px 0 0; background: linear-gradient(#d8e7fd, #a9c6f3); }
.dtabs svg { z-index: 1; }
.dtabs > button:not(.flat)::before { content: ""; position: absolute; left: -11px; top: -1px; width: 16px; height: 20px; transform: skewX(-45deg); border: 1px solid #3060b0; border-width: 1px 0 0 1px; background: linear-gradient(#d8e7fd, #a9c6f3); }
.dtabs > .on { font-weight: bold; padding-right: 8px; gap: 2px; background: linear-gradient(#fff0d8, #ffc47c); }
.dtabs > button.on:not(.flat)::before { left: -6px; width: 14px; background: linear-gradient(#fff0d8, #ffc47c); }
.dtabs .shut { margin-left: 3px; }
.dtools { margin-left: auto; display: flex; gap: 4px; padding: 0 3px 6px 0; }
.view { flex: 1; min-height: 0; display: grid; grid-template: minmax(0, 1fr) 18px / minmax(0, 1fr) 16px; border: 1px solid #66605c; border-right-width: 2px; box-shadow: inset 2px 2px 0 #a8a09a, inset 0 -2px 0 #fbe7c0; padding: 3px 1px 2px 2px; background: #efefef; }
.canvas { display: flex; justify-content: center; align-items: flex-start; padding: 4px 4px 0 0; overflow: hidden; border: 1px solid #fff; border-width: 0 1px 1px 0; }
.plot { width: 671px; height: 447px; box-shadow: 3px 3px 0 #808080; }
.vs-view { grid-template-rows: 17px 212fr 53fr 162fr 17px; }
.hs-view { height: auto; grid-template-columns: 17px 490fr 246fr 247fr 17px; }
.frame { fill: #fff; stroke: #000; }
.axes { fill: none; }
.gridline { stroke: #b4b4b4; }
.curve { fill: none; stroke: #1414b0; }
.lead { fill: none; stroke: #000; }
.shade { fill: #808080; }
.ptitle { font: bold 20px "Liberation Serif", serif; text-anchor: middle; }
.num { font: 16px "Liberation Sans", sans-serif; text-anchor: end; }
.cap { font: 17px "Liberation Sans", sans-serif; }
.mid { text-anchor: middle; }
.small { font: 12px "Liberation Sans", sans-serif; }
.split-h { height: 8px; flex: none; background: repeating-linear-gradient(90deg, #9fb4d6 0 2px, transparent 2px 4px) 50% 2px / 62px 2px no-repeat #dbe8fb; }

.status { flex: none; background: #f0f0f0; }
.stools { height: 27px; display: flex; align-items: center; }
.stools button { height: 22px; padding: 0 3px; gap: 2px; }
.stools .first { gap: 7px; font-size: 12px; }
.stools i { width: 1px; height: 20px; margin: 0 3px; background: #c4c4c4; }
.stools .lit { border: 1px solid #2a86d0; background: #cfe6fa; padding: 0 2px; }
.stools button:disabled { color: #a0a0a0; }
.logbox { height: 69px; display: flex; background: #fff; overflow: hidden; }
.log { flex: 1; }
.log li { height: 20px; display: flex; align-items: center; gap: 4px; padding-left: 20px; }
.log svg { width: 16px; height: 16px; }
.log time { width: 62px; }
.log .grp { padding-left: 2px; font-size: 12px; font-weight: bold; gap: 6px; }
.log .grp svg { width: 14px; height: 12px; }
.vs-log { grid-template-rows: 17px 1fr 16fr 19fr 17px; }

.foot { height: 20px; flex: none; display: flex; align-items: center; justify-content: flex-end; border-top: 1px solid #d6d6d6; background: #f0f0f0; padding-right: 4px; }
.foot i { width: 104px; height: 19px; border-left: 1px solid #d0d0d0; }
.foot i + svg { margin-left: 6px; }

.task { height: 40px; flex: none; display: flex; background: #05070b; color: #fff; overflow: hidden; }
.task .ic { width: 48px; height: 40px; justify-content: center; }
.task .edge { margin: 0 5px 0 3px; }
.task .app-b { width: 143px; height: 40px; padding-left: 6px; gap: 5px; margin-right: 8px; border-bottom: 2px solid #78b4ec; }
.task .app-b + .ic { margin-left: -5px; margin-right: 6px; }
.task .app-b.on { width: 150px; margin: 0 4px 0 -4px; padding-left: 10px; background: #33363a; }
.tray { margin-left: auto; display: flex; align-items: center; gap: 8px; }
.clock { width: 54px; text-align: center; line-height: 18px; margin: 0 10px 0 1px; }
.clock time { display: block; }
.note { width: 10px; height: 16px; }
```
